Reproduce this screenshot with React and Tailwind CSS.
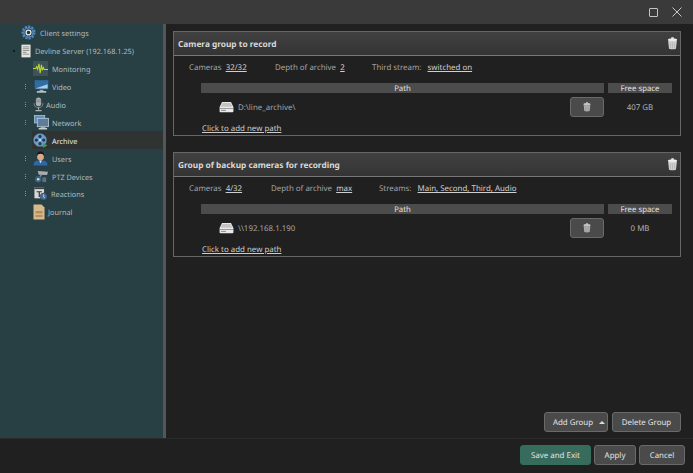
import React from "react";

function Trash({ s = 12, dim = false }) {
  return (
    <svg width={s} height={s} viewBox="0 0 12 12" className={dim ? "opacity-75" : ""}>
      <ellipse cx="6" cy="2.600" rx="4.300" ry="1.500" fill="#ececec" />
      <rect x="4.800" y=".300" width="2.400" height="1.400" rx=".4" fill="#f4f4f4" />
      <path d="M2 3.800h8l-.8 7q-3.200 1-6.400 0z" fill="#cfcfcf" />
      <path d="M4.200 5.200v5M6 5.200v5.300M7.800 5.200v5" stroke="#a8a8a8" strokeWidth=".5" />
    </svg>
  );
}

function Drive() {
  return (
    <svg width="15" height="12" viewBox="0 0 15 12">
      <path d="M3 1h9l2.400 5v4.400q0 .8-.8.8H1.400q-.8 0-.8-.8V6z" fill="#e9e9e9" />
      <path d="M3.400 2h8.200l1.800 3.800H1.600z" fill="#c4c4c4" />
      <path d="M1 7.500h13" stroke="#888" strokeWidth=".8" />
      <path d="M2 9.400h5" stroke="#777" strokeWidth=".8" />
    </svg>
  );
}

const icons = {
  gear: (
    <svg width="15" height="15" viewBox="0 0 16 16">
      <circle cx="8" cy="8" r="6.200" fill="none" stroke="#4f86b8" strokeWidth="2.600" strokeDasharray="2.400 1.100" />
      <circle cx="8" cy="8" r="4.800" fill="#26333a" stroke="#5d94c4" strokeWidth="1.200" />
      <circle cx="8" cy="8" r="2.600" fill="none" stroke="#e4e8ea" strokeWidth="1.400" />
    </svg>
  ),
  server: (
    <svg width="10" height="14" viewBox="0 0 11 15">
      <rect width="10" height="14" x=".5" y=".5" fill="#e6e6e2" />
      <path d="M2 3h7M2 5h7M2 7h7M2 9h4M2 11h7" stroke="#8b8b85" strokeWidth="1" />
    </svg>
  ),
  mon: (
    <svg width="15" height="15" viewBox="0 0 16 16">
      <rect width="16" height="16" fill="#3f5257" />
      <path d="M0 8h3l1-2 1 3 1.400-6 1.200 10L9 4l1 6 1-3 1 2h4" fill="none" stroke="#b7dc2e" strokeWidth="1.100" />
    </svg>
  ),
  video: (
    <svg width="15" height="15" viewBox="0 0 16 15">
      <rect width="15" height="10" x=".5" y=".5" rx=".5" fill="#2f6da3" stroke="#24465f" strokeWidth=".6" />
      <path d="M1.500 9.500h13V5z" fill="#a8cfe6" />
      <rect x="6" y="11" width="4" height="1.500" fill="#9aa7ad" />
      <rect x="3" y="12.500" width="10" height="1.500" fill="#d5dde0" />
    </svg>
  ),
  audio: (
    <svg width="11" height="15" viewBox="0 0 12 17">
      <rect x="3" y=".5" width="6" height="10" rx="3" fill="#aab1b3" />
      <path d="M3.200 3.500h5.600M3.200 5.500h5.600" stroke="#6c7375" strokeWidth=".7" />
      <path d="M1 7q0 5 5 5t5-5" fill="none" stroke="#899092" strokeWidth="1" />
      <path d="M6 12v2.500M2.500 15.500h7" stroke="#aab1b3" strokeWidth="1.400" />
    </svg>
  ),
  net: (
    <svg width="15" height="15" viewBox="0 0 16 16">
      <rect x=".5" y=".5" width="11" height="8" fill="#5d8fc0" stroke="#bcd0e2" strokeWidth=".7" />
      <rect x="3.500" y="3.500" width="12" height="9" fill="#5f7d99" stroke="#c4d2de" strokeWidth=".8" />
      <rect x="7" y="13" width="5" height="1" fill="#b7c0c6" />
      <rect x="5" y="14" width="9" height="1.400" fill="#dde3e6" />
    </svg>
  ),
  archive: (
    <svg width="15" height="15" viewBox="0 0 16 16">
      <circle cx="7.500" cy="7.500" r="7" fill="#6f9fc9" stroke="#406a8e" strokeWidth=".6" />
      <circle cx="7.500" cy="3.600" r="1.700" fill="#22384a" />
      <circle cx="7.500" cy="11.400" r="1.700" fill="#22384a" />
      <circle cx="3.600" cy="7.500" r="1.700" fill="#22384a" />
      <circle cx="11.400" cy="7.500" r="1.700" fill="#22384a" />
      <circle cx="7.500" cy="7.500" r="1" fill="#dce8f0" />
      <path d="M10.500 10.500l5 2.700-5 2.700z" fill="#3f9a68" />
    </svg>
  ),
  users: (
    <svg width="15" height="15" viewBox="0 0 16 16">
      <path d="M.5 15.500q0-5 4.500-5.500h6q4.500.5 4.500 5.500z" fill="#2d68a8" />
      <path d="M6.500 10l1.500 3 1.500-3z" fill="#e9e9e9" />
      <ellipse cx="8" cy="6" rx="3.600" ry="4" fill="#d9a98a" />
      <path d="M4 5.500q0-5 4-5t4 5q-1-2.500-4-2.500t-4 2.500z" fill="#14181a" />
    </svg>
  ),
  ptz: (
    <svg width="15" height="13" viewBox="0 0 16 14">
      <path d="M4 1l11 1-1 3.500-9-.5z" fill="#a8adb0" />
      <path d="M8 5l-2 3" stroke="#8b9296" strokeWidth="1.400" />
      <circle cx="4.500" cy="10" r="3.500" fill="#3d5f80" />
      <circle cx="4.500" cy="10" r="1.400" fill="#c9d5de" />
      <rect x="9" y="8" width="4" height="5" fill="#5e7284" />
    </svg>
  ),
  react: (
    <svg width="14" height="15" viewBox="0 0 16 16">
      <rect x=".5" y="1" width="11" height="12.500" fill="#d9d9d6" />
      <rect x=".5" y="1" width="11" height="2" fill="#3a3f42" />
      <path d="M3 6h6M6 6v6" stroke="#333" strokeWidth="1.400" />
      <circle cx="11" cy="11.500" r="4" fill="#4a6f96" stroke="#23384c" strokeWidth=".6" />
      <path d="M11 9v3l1.500 1" fill="none" stroke="#dfe7ee" strokeWidth=".8" />
    </svg>
  ),
  journal: (
    <svg width="12" height="16" viewBox="0 0 12 16">
      <path d="M.5.500h8l3 3v12h-11z" fill="#d7b98c" />
      <path d="M2.500 7h7v2.500h-7zM2.500 11h7v2h-7z" fill="#b48f5e" />
    </svg>
  ),
};

const tree = [
  { t: "Client settings", i: "gear", ix: 21, tx: 40 },
  { t: "Devline Server (192.168.1.25)", i: "server", ix: 21, tx: 35, exp: "open" },
  { t: "Monitoring", i: "mon", ix: 33, tx: 52 },
  { t: "Video", i: "video", ix: 34, tx: 52, exp: "dots" },
  { t: "Audio", i: "audio", ix: 33, tx: 46, exp: "dots" },
  { t: "Network", i: "net", ix: 34, tx: 52, exp: "dots" },
  { t: "Archive", i: "archive", ix: 33, tx: 52, active: true },
  { t: "Users", i: "users", ix: 33, tx: 52, exp: "dots" },
  { t: "PTZ Devices", i: "ptz", ix: 34, tx: 52, exp: "dots" },
  { t: "Reactions", i: "react", ix: 34, tx: 51, exp: "dots" },
  { t: "Journal", i: "journal", ix: 33, tx: 48 },
];

function TreeRow({ r }) {
  return (
    <div className="flex h-[17.900px] items-center relative">
      <div className="w-[32px] h-full shrink-0 flex items-center">
        {r.exp === "dots" && <span className="w-[1px] h-[5px] ml-[25px] border-l border-dotted border-[#7d9296]" />}
        {r.exp === "open" && <span className="w-[2px] h-[2px] ml-[13px] bg-[#10191b]" />}
      </div>
      <div className={`flex items-center h-full flex-1 min-w-0 ${r.active ? "bg-[#2f3331]" : ""}`}>
        <div className="flex items-center h-full" style={{ marginLeft: r.ix - 32 }}>
          {icons[r.i]}
        </div>
        <span
          className={`absolute whitespace-nowrap pt-[4px] text-[7.300px] ${r.active ? "text-[#e8ecec]" : "text-[#b0bcbe]"}`}
          style={{ left: r.tx }}
        >
          {r.t}
        </span>
      </div>
    </div>
  );
}

function Btn({ children, className = "" }) {
  return (
    <div
      className={`flex items-center justify-center rounded-[3px] border border-[#6a6a6a] bg-[#4a4a4a] pt-[3px] text-[7.900px] text-[#e4e4e4] ${className}`}
    >
      {children}
    </div>
  );
}

function U({ children }) {
  return <span className="underline text-[#d0d0d0]">{children}</span>;
}

function Panel({ title, info, path, space, className = "" }) {
  return (
    <section className={`border border-[#666] h-[105px] flex flex-col ${className}`}>
      <div className="h-[24px] shrink-0 border-b border-[#777] bg-gradient-to-b from-[#414141] to-[#343434] flex items-center justify-between pl-[4px] pr-[1px]">
        <span className="font-bold pt-[3px] text-[8.300px] text-[#d8d8d8]">{title}</span>
        <Trash s={13} />
      </div>
      <div className="flex items-center h-[23px] pl-[15px] pt-[3px] text-[7.900px] text-[#a4a4a4] whitespace-nowrap">{info}</div>
      <div className="flex gap-[4px] h-[10px] mt-[4px] ml-[27px] text-[7.800px] text-[#e0e0e0] leading-[13px]">
        <div className="w-[403px] bg-[#4c4c4c] text-center">Path</div>
        <div className="w-[64px] bg-[#4c4c4c] text-center">Free space</div>
      </div>
      <div className="flex items-center h-[20px] mt-[4px] ml-[27px]">
        <div className="flex items-center w-[369px] pl-[18px] gap-[4px] text-[7.900px] text-[#a4a4a4]">
          <Drive />
          <span className="pt-[3px]">{path}</span>
        </div>
        <Btn className="w-[34px] h-[20px] !pt-0">
          <Trash s={10} dim />
        </Btn>
        <div className="w-[68px] pl-[4px] pt-[3px] text-center text-[7.900px] text-[#b4b4b4]">{space}</div>
      </div>
      <div className="ml-[28px] mt-[6px] text-[7.900px] leading-[12px] text-[#cccccc] underline">Click to add new path</div>
    </section>
  );
}

export default function App() {
  return (
    <div className="w-[693px] h-[473px] bg-[#202020] flex flex-col overflow-hidden font-['Noto_Sans',sans-serif] [text-rendering:geometricPrecision]">
      <header className="h-[24px] shrink-0 bg-[#3a3a3a] flex items-center justify-end gap-[14px] pr-[11px]">
        <span className="w-[9px] h-[9px] border border-[#c4c4c4] rounded-[1px]" />
        <svg width="10" height="10" viewBox="0 0 10 10">
          <path d="M.5.500l9 9M9.500.500l-9 9" stroke="#c8c8c8" strokeWidth="1" />
        </svg>
      </header>
      <div className="h-[414px] shrink-0 flex">
        <aside className="w-[163px] shrink-0 bg-[#283f44] flex flex-col relative">
          {tree.map((r) => (
            <TreeRow key={r.t} r={r} />
          ))}
        </aside>
        <div className="w-[3px] shrink-0 bg-[#565656]" />
        <main className="flex-1 flex flex-col pt-[7px] pl-[7px] pr-[12px] pb-[6px]">
          <Panel
            title="Camera group to record"
            path="D:\line_archive\"
            space="407 GB"
            info={
              <>
                <span className="w-[86px]">Cameras&nbsp; <U>32/32</U></span>
                <span className="w-[97px]">Depth of archive&nbsp; <U>2</U></span>
                <span>Third stream:&nbsp;&nbsp; <U>switched on</U></span>
              </>
            }
          />
          <Panel
            className="mt-[16px]"
            title="Group of backup cameras for recording"
            path="\\192.168.1.190"
            space="0 MB"
            info={
              <>
                <span className="w-[82px]">Cameras&nbsp; <U>4/32</U></span>
                <span className="w-[108px]">Depth of archive&nbsp; <U>max</U></span>
                <span>Streams:&nbsp;&nbsp; <U>Main, Second, Third, Audio</U></span>
              </>
            }
          />
          <div className="flex-1" />
          <div className="flex justify-end gap-[4px]">
            <Btn className="w-[64px] h-[20px] relative pr-[6px]">
              Add Group
              <span className="absolute right-[2px] top-[8px] w-0 h-0 border-x-[3px] border-x-transparent border-b-[3px] border-b-[#ddd]" />
            </Btn>
            <Btn className="w-[69px] h-[20px]">Delete Group</Btn>
          </div>
        </main>
      </div>
      <footer className="flex-1 border-t border-[#2a2a2a] flex justify-end gap-[3px] pt-[6px] pr-[8px]">
        <Btn className="w-[71px] h-[20px] !bg-[#376b5b] !border-[#376b5b]">Save and Exit</Btn>
        <Btn className="w-[42px] h-[20px]">Apply</Btn>
        <Btn className="w-[46px] h-[20px]">Cancel</Btn>
      </footer>
    </div>
  );
}
